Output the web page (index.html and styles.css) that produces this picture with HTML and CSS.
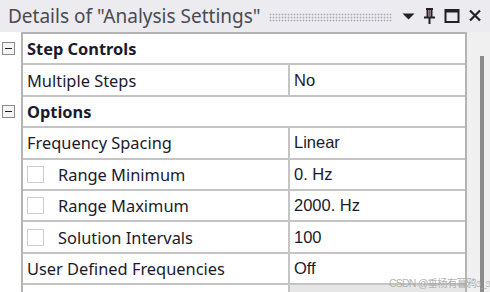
FILE: index.html
```html
<!DOCTYPE html>
<html lang="en">
<head>
  <meta charset="UTF-8" />
  <title>Details of "Analysis Settings"</title>
  <link rel="stylesheet" href="styles.css">
</head>
<body>
  <div class="panel">
    <div class="titlebar">
      <span class="title">Details of "Analysis Settings"</span>
      <span class="grip"></span>
      <svg class="tb-icon" width="13" height="16" viewBox="0 0 13 16"><path d="M0.5 5.5 L12.5 5.5 L6.5 11.5 Z" fill="#222"/></svg>
      <svg class="tb-icon" width="13" height="18" viewBox="0 0 13 18"><path d="M3 2 H10 M4.5 2 V10 M8.5 2 V10 M1 10.5 H12 M6.5 10.5 V17" stroke="#222" stroke-width="2" fill="none"/><path d="M6.5 3 V9.5" stroke="#b84030" stroke-width="1.2"/></svg>
      <svg class="tb-icon" width="16" height="16" viewBox="0 0 16 16"><rect x="1.5" y="2" width="13" height="12" stroke="#222" stroke-width="2" fill="none"/><rect x="1.5" y="2" width="13" height="2.5" fill="#222"/></svg>
      <svg class="tb-icon" width="14" height="16" viewBox="0 0 14 16"><path d="M2 2.5 L12 12.5 M12 2.5 L2 12.5" stroke="#222" stroke-width="2.2"/></svg>
    </div>

    <div class="content">
      <div class="gutter">
        <div class="gut-cell"><span class="toggle"></span></div>
        <div class="gut-cell"></div>
        <div class="gut-cell"><span class="toggle"></span></div>
      </div>

      <div class="grid">
        <div class="row group"><div class="cell wide">Step Controls</div></div>
        <div class="row"><div class="cell name">Multiple Steps</div><div class="cell value">No</div></div>
        <div class="row group"><div class="cell wide">Options</div></div>
        <div class="row"><div class="cell name">Frequency Spacing</div><div class="cell value">Linear</div></div>
        <div class="row"><div class="cell name"><span class="check"></span>Range Minimum</div><div class="cell value">0. Hz</div></div>
        <div class="row"><div class="cell name"><span class="check"></span>Range Maximum</div><div class="cell value">2000. Hz</div></div>
        <div class="row"><div class="cell name"><span class="check"></span>Solution Intervals</div><div class="cell value">100</div></div>
        <div class="row"><div class="cell name">User Defined Frequencies</div><div class="cell value">Off</div></div>
        <div class="row"><div class="cell name">Solution Method</div><div class="cell value readonly">Program Controlled</div></div>
      </div>

      <div class="scroll">
        <div class="thumb"></div>
      </div>
    </div>

    <div class="watermark">CSDN @垂杨有暮鸦ͽ_ͽ</div>
  </div>
</body>
</html>
```

FILE: styles.css
```css
html, body {
  margin: 0;
  padding: 0;
}
body {
  width: 490px;
  height: 292px;
  overflow: hidden;
  background: #ffffff;
  font-family: "Noto Sans", "Open Sans", sans-serif;
}
.panel {
  position: relative;
  height: 292px;
  overflow: hidden;
}
.titlebar {
  height: 32px;
  background: #ebebf0;
  display: flex;
  align-items: center;
  padding: 0 8px 0 8px;
  gap: 8px;
}
.title {
  font-size: 19px;
  color: #4a4a52;
  white-space: nowrap;
}
.grip {
  flex: 1;
  height: 9px;
  margin: 2px 2px 0 0;
  background-image: radial-gradient(circle, #a8a8b0 0.8px, transparent 1.1px);
  background-size: 3px 3px;
}
.tb-icon {
  display: block;
}
.content {
  display: flex;
  height: 260px;
}
.gutter {
  width: 21px;
  padding-top: 1px;
}
.gut-cell {
  height: 31.4px;
  display: flex;
  align-items: center;
  justify-content: center;
  padding-right: 4px;
  box-sizing: border-box;
}
.toggle {
  width: 11px;
  height: 11px;
  border: 1px solid #8a8a8a;
  background: #f4f4f4;
  position: relative;
}
.toggle::after {
  content: "";
  position: absolute;
  left: 2px;
  right: 2px;
  top: 5px;
  height: 1px;
  background: #222;
}
.grid {
  width: 446px;
  border-left: 2px solid #b4b4b4;
  border-right: 2px solid #b4b4b4;
  border-top: 2px solid #b4b4b4;
  box-sizing: border-box;
}
.row {
  display: flex;
  height: 31.4px;
  border-bottom: 2px solid #c4c4c4;
  box-sizing: border-box;
}
.cell {
  display: flex;
  align-items: center;
  font-size: 16.4px;
  color: #1a1a2e;
  padding-left: 4px;
  white-space: nowrap;
  box-sizing: border-box;
}
.name {
  width: 267px;
  border-right: 2px solid #c4c4c4;
}
.value {
  flex: 1;
  font-family: "Liberation Sans", Arial, sans-serif;
  font-size: 16.5px;
  padding-left: 4px;
}
.wide {
  flex: 1;
}
.group .cell {
  font-weight: bold;
}
.readonly {
  background: #e6e6e6;
}
.check {
  width: 17px;
  height: 17px;
  border: 1px solid #cfcfcf;
  box-sizing: border-box;
  margin-right: 14px;
}
.scroll {
  flex: 1;
  background: #f0f0f0;
  position: relative;
}
.thumb {
  position: absolute;
  left: 13px;
  top: 24px;
  width: 4px;
  height: 240px;
  background: #8c8c8c;
}
.watermark {
  position: absolute;
  right: 0;
  bottom: 2px;
  font-size: 10.5px;
  letter-spacing: -0.8px;
  color: rgba(165, 165, 165, 0.85);
  font-family: "Liberation Sans", "Noto Sans CJK SC", sans-serif;
}
```
